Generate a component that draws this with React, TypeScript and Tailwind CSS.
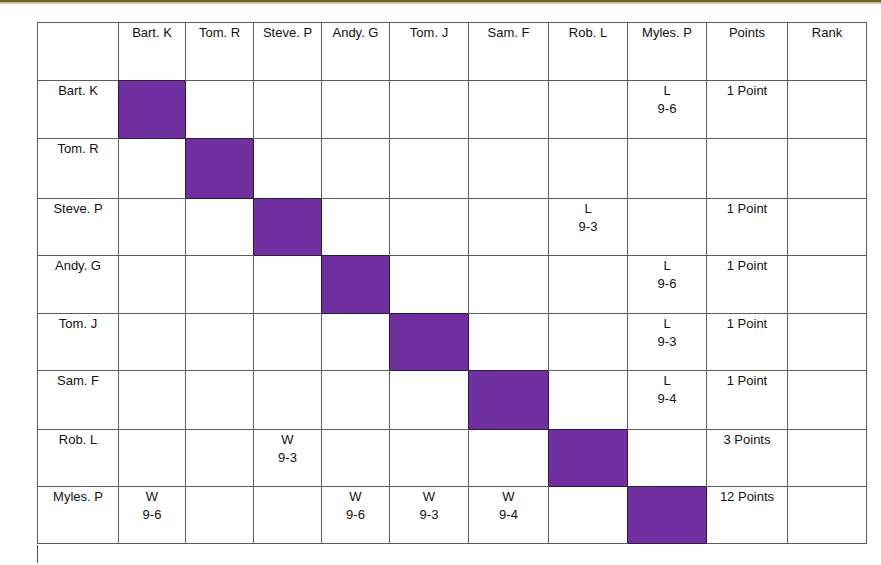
import React from 'react';

const players = ['Bart. K', 'Tom. R', 'Steve. P', 'Andy. G', 'Tom. J', 'Sam. F', 'Rob. L', 'Myles. P'];

// results[row][col] = [letter, score]
const results: Record<number, Record<number, [string, string]>> = {
  0: { 7: ['L', '9-6'] },
  2: { 6: ['L', '9-3'] },
  3: { 7: ['L', '9-6'] },
  4: { 7: ['L', '9-3'] },
  5: { 7: ['L', '9-4'] },
  6: { 2: ['W', '9-3'] },
  7: { 0: ['W', '9-6'], 3: ['W', '9-6'], 4: ['W', '9-3'], 5: ['W', '9-4'] },
};

const points = ['1 Point', '', '1 Point', '1 Point', '1 Point', '1 Point', '3 Points', '12 Points'];

const rowHeights = ['h-[58px]', 'h-[60px]', 'h-[57px]', 'h-[58px]', 'h-[57px]', 'h-[59px]', 'h-[57px]', 'h-[57px]'];

const cell = 'border-r border-b border-[#5e5e5e] text-center leading-[18px] pt-px';

export default function App() {
  return (
    <div
      className="min-h-screen bg-white text-[13px] text-[#111]"
      style={{ fontFamily: '"Liberation Sans", Arial, sans-serif' }}
    >
      <div className="h-[2px] bg-[#76611a]" />
      <div className="h-[3px] bg-gradient-to-b from-[#a9a390] to-white" />
      <div className="pt-[17px] pl-[37px]">
        <div className="grid w-[830px] grid-cols-[81px_67px_68px_68px_68px_79px_80px_79px_79px_81px_79px] border-l border-t border-[#5e5e5e]">
          <div className={`${cell} h-[58px]`} />
          {players.map((p) => (
            <div key={p} className={cell}>
              {p}
            </div>
          ))}
          <div className={cell}>Points</div>
          <div className={cell}>Rank</div>

          {players.map((p, r) => (
            <React.Fragment key={p}>
              <div className={`${cell} ${rowHeights[r]}`}>{p}</div>
              {players.map((_, c) =>
                r === c ? (
                  <div
                    key={c}
                    className="border-r border-b border-[#2a1a33] bg-[#7030a0] shadow-[-1px_-1px_0_0_#2a1a33]"
                  />
                ) : (
                  <div key={c} className={cell}>
                    {results[r]?.[c] && (
                      <>
                        <div>{results[r][c][0]}</div>
                        <div>{results[r][c][1]}</div>
                      </>
                    )}
                  </div>
                )
              )}
              <div className={cell}>{points[r]}</div>
              <div className={cell} />
            </React.Fragment>
          ))}
        </div>
        <div className="mt-px h-[18px] w-px bg-[#555]" />
      </div>
    </div>
  );
}
